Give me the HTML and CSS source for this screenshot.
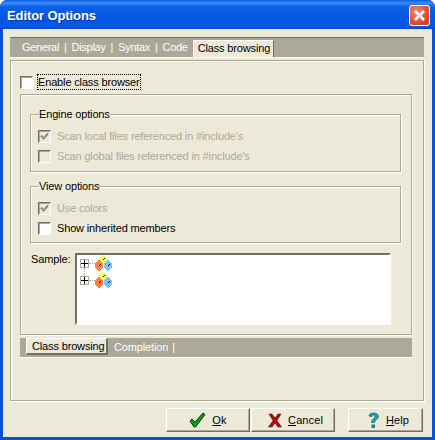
FILE: index.html
```html
<!DOCTYPE html>
<html lang="en">
<head>
    <meta charset="UTF-8">
    <title>Editor Options</title>
    <link rel="stylesheet" href="styles.css">
</head>
<body>
    <div class="window">
        <header class="titlebar">
            <span class="title">Editor Options</span>
            <span class="close">
                <svg width="13" height="13" viewBox="0 0 13 13"><path d="M2 2l9 9M11 2l-9 9" stroke="#fff" stroke-width="2.6" fill="none"/></svg>
            </span>
        </header>
        <div class="client">
            <div class="tabbar top-tabs">
                <span class="tab-link">General</span><span class="sep">|</span>
                <span class="tab-link">Display</span><span class="sep">|</span>
                <span class="tab-link">Syntax</span><span class="sep">|</span>
                <span class="tab-link">Code</span>
                <span class="tab active-top">Class browsing</span>
            </div>
            <div class="page etched">
                <div class="check-row main-check">
                    <span class="cb"></span>
                    <span class="focus">Enable class browser</span>
                </div>
                <div class="panel etched">
                    <fieldset class="group engine etched">
                        <legend>Engine options</legend>
                        <div class="check-row off">
                            <span class="cb dis"><svg width="9" height="9" viewBox="0 0 9 9"><path d="M1 3.500l2.500 3L8 1.500" stroke="#8f8d80" stroke-width="2" fill="none"/></svg></span>
                            <span>Scan local files referenced in #include's</span>
                        </div>
                        <div class="check-row off">
                            <span class="cb dis"></span>
                            <span>Scan global files referenced in #include's</span>
                        </div>
                    </fieldset>
                    <fieldset class="group view etched">
                        <legend>View options</legend>
                        <div class="check-row off">
                            <span class="cb dis"><svg width="9" height="9" viewBox="0 0 9 9"><path d="M1 3.500l2.500 3L8 1.500" stroke="#8f8d80" stroke-width="2" fill="none"/></svg></span>
                            <span>Use colors</span>
                        </div>
                        <div class="check-row">
                            <span class="cb"></span>
                            <span>Show inherited members</span>
                        </div>
                    </fieldset>
                    <div class="sample">
                        <label class="sample-label">Sample:</label>
                        <div class="tree">
                            <div class="node">
                                <span class="expander link-down"><svg width="7" height="7" viewBox="0 0 7 7"><path d="M0 3h7v1H0zM3 0h1v7H3z"/></svg></span>
                                <span class="dots"></span>
                                <svg class="gems" width="17" height="17" viewBox="0 0 17 17" shape-rendering="crispEdges">
                                    <path transform="translate(4 0)" fill="#ffff66" d="M3 0h2v1h1v1h1v1h1v5H7v1H6v1H5v1H3v-1H2V9H1V8H0V3h1V2h1V1h1z"/>
                                    <path transform="translate(0 5)" fill="#ff8040" d="M3 0h2v1h1v1h1v1h1v5H7v1H6v1H5v1H3v-1H2V9H1V8H0V3h1V2h1V1h1z"/>
                                    <path transform="translate(9 5)" fill="#80c0ff" d="M3 0h2v1h1v1h1v1h1v5H7v1H6v1H5v1H3v-1H2V9H1V8H0V3h1V2h1V1h1z"/>
                                    <path fill="#000" d="M9 3h1v1H9zM8 4h1v1H8zM5 9h1v1H5zM4 10h1v1H4zM14 9h1v1h-1zM13 10h1v1h-1z"/>
                                </svg>
                            </div>
                            <div class="node">
                                <span class="expander"><svg width="7" height="7" viewBox="0 0 7 7"><path d="M0 3h7v1H0zM3 0h1v7H3z"/></svg></span>
                                <span class="dots"></span>
                                <svg class="gems" width="17" height="17" viewBox="0 0 17 17" shape-rendering="crispEdges">
                                    <path transform="translate(4 0)" fill="#ffff66" d="M3 0h2v1h1v1h1v1h1v5H7v1H6v1H5v1H3v-1H2V9H1V8H0V3h1V2h1V1h1z"/>
                                    <path transform="translate(0 5)" fill="#ff8040" d="M3 0h2v1h1v1h1v1h1v5H7v1H6v1H5v1H3v-1H2V9H1V8H0V3h1V2h1V1h1z"/>
                                    <path transform="translate(9 5)" fill="#80c0ff" d="M3 0h2v1h1v1h1v1h1v5H7v1H6v1H5v1H3v-1H2V9H1V8H0V3h1V2h1V1h1z"/>
                                    <path fill="#000" d="M9 3h1v1H9zM8 4h1v1H8zM5 9h1v1H5zM4 10h1v1H4zM14 9h1v1h-1zM13 10h1v1h-1z"/>
                                </svg>
                            </div>
                        </div>
                    </div>
                </div>
                <div class="tabbar sub-tabs">
                    <span class="tab active-sub">Class browsing</span>
                    <span class="tab-link">Completion</span><span class="sep">|</span>
                </div>
            </div>
            <footer class="buttons">
                <button class="btn btn-ok">
                    <svg width="17" height="16" viewBox="0 0 17 16"><path d="M1 9l2-2 3 3 8-9 2 1.500L6.500 15H5z" fill="#0f9a1c" stroke="#07420f" stroke-width="1"/></svg>
                    <span><u>O</u>k</span>
                </button>
                <button class="btn btn-cancel">
                    <svg width="14" height="15" viewBox="0 0 14 15"><path d="M1 1h3l3 4 3-4h3L9 7.500l4.500 6.500h-3.500L7 10l-3 4H.5L5 7.500z" fill="#a80e0e" stroke="#6e0a0a" stroke-width=".6"/></svg>
                    <span><u>C</u>ancel</span>
                </button>
                <button class="btn btn-help">
                    <svg width="13" height="17" viewBox="0 0 13 17"><path d="M2 4c0-4 9-4 9.500 0 .3 3-4 4-4 6.500H4.500C4.500 7.500 8 6 8 4 8 2.500 5.500 2.500 5 4.500z" fill="#1ba6bb" stroke="#0c5e6e" stroke-width=".7"/><rect x="4.500" y="12.500" width="3.500" height="3.500" fill="#0d7f92"/></svg>
                    <span><u>H</u>elp</span>
                </button>
            </footer>
        </div>
    </div>
</body>
</html>
```

FILE: styles.css
```css
html, body {
    margin: 0;
    padding: 0;
    background: #fff;
}

body {
    width: 435px;
    height: 440px;
    overflow: hidden;
    font-family: "Liberation Sans", Arial, sans-serif;
    font-size: 11px;
    letter-spacing: -0.15px;
    color: #000;
}

.window {
    height: 440px;
    display: flex;
    flex-direction: column;
    background: #0a50dc;
    border-radius: 7px 7px 0 0;
    overflow: hidden;
}

.titlebar {
    height: 29px;
    flex: none;
    display: flex;
    align-items: center;
    justify-content: space-between;
    padding: 2px 5px 0 7px;
    box-sizing: border-box;
    background: linear-gradient(#0a5be0 0, #3b8cf5 3px, #0c5fe6 7px, #0555e4 20px, #0a58e8 27px, #0040c0 29px);
}

.title {
    color: #fff;
    font-size: 13px;
    font-weight: 700;
    letter-spacing: -0.1px;
    text-shadow: 1px 1px 0 #0a3aa0;
}

.close {
    width: 19px;
    height: 19px;
    display: flex;
    align-items: center;
    justify-content: center;
    border: 1px solid #fff;
    border-radius: 3px;
    background: radial-gradient(circle at 35% 30%, #ee8a6a, #d6492a 70%, #c0391c);
}

.client {
    flex: 1;
    margin: 0 3px 3px 3px;
    padding: 8px 8px 0 7px;
    background: #ece9d8;
    box-sizing: border-box;
}

.etched {
    border: 1px solid #aca899;
    box-shadow: 1px 1px 0 #fff, inset 1px 1px 0 #fff;
}

/* tab bars */
.tabbar {
    display: flex;
    align-items: flex-start;
    background: #aca899;
    color: #fff;
    box-sizing: border-box;
}

.top-tabs {
    height: 21px;
    border-top: 1px solid #716f64;
    border-bottom: 1px solid #fff;
    padding-left: 12px;
    letter-spacing: -0.3px;
}

.sub-tabs {
    height: 20px;
    margin-top: 3px;
    border-bottom: 1px solid #fff;
    padding-left: 6px;
}

.tab-link {
    line-height: 18px;
}

.sep {
    line-height: 18px;
    margin: 0 5px;
}

.sub-tabs .sep {
    margin-left: 4px;
}

.tab {
    color: #000;
    background: #ece9d8;
    box-sizing: border-box;
    border-top: 1px solid #fff;
    border-left: 1px solid #fff;
    border-right: 2px solid #716f64;
    letter-spacing: -0.15px;
    white-space: nowrap;
}

.active-top {
    width: 81px;
    height: 17px;
    margin-top: 2px;
    margin-left: 5px;
    padding-left: 4px;
    line-height: 15px;
    border-right-width: 1px;
}

.active-sub {
    width: 82px;
    height: 17px;
    margin-right: 6px;
    padding-left: 5px;
    line-height: 15px;
    border-bottom: 2px solid #716f64;
}

/* pages */
.page {
    height: 341px;
    margin-top: 2px;
    padding: 13px 11px 0 9px;
    box-sizing: border-box;
}

.check-row {
    height: 16px;
    display: flex;
    align-items: center;
    gap: 6px;
}

.main-check {
    gap: 4px;
}

.focus {
    outline: 1px dotted #000;
    padding: 1px 0;
    margin-left: 1px;
}

.cb {
    width: 13px;
    height: 13px;
    flex: none;
    display: flex;
    align-items: center;
    justify-content: center;
    box-sizing: border-box;
    background: #fff;
    border: 1px solid;
    border-color: #716f64 #fff #fff #716f64;
    box-shadow: inset 1px 1px 0 #aca899;
}

.cb.dis {
    background: #ece9d8;
}

.off {
    color: #aca899;
}

.panel {
    height: 241px;
    margin-top: 4px;
    padding: 14px 10px 0 9px;
    box-sizing: border-box;
}

.group {
    margin: 0;
    padding: 6px 0 0 7px;
    min-width: 0;
    box-sizing: border-box;
}

.group legend {
    padding: 0;
    margin-left: 1px;
    line-height: 11px;
}

.engine {
    height: 63px;
    margin-bottom: 9px;
}

.view {
    height: 62px;
}

.group .check-row {
    height: 20px;
}

/* sample tree */
.sample {
    display: flex;
    margin-top: 10px;
}

.sample-label {
    width: 45px;
    padding-left: 1px;
    box-sizing: border-box;
    line-height: 13px;
}

.tree {
    width: 316px;
    height: 72px;
    box-sizing: border-box;
    padding: 0 0 0 3px;
    background: #fff;
    border: 2px solid;
    border-color: #716f64 #fff #fff #716f64;
}

.node {
    height: 17px;
    display: flex;
    align-items: center;
}

.expander {
    position: relative;
    width: 9px;
    height: 9px;
    flex: none;
    display: flex;
    align-items: center;
    justify-content: center;
    box-sizing: border-box;
    border: 1px solid #aca899;
    background: #fff;
}

.link-down::after {
    content: "";
    position: absolute;
    left: 3px;
    top: 8px;
    height: 8px;
    border-left: 1px dotted #aca899;
}

.dots {
    width: 6px;
    border-top: 1px dotted #aca899;
}

.gems {
    flex: none;
}

/* bottom buttons */
.buttons {
    display: flex;
    justify-content: flex-end;
    margin-top: 7px;
    padding-right: 1px;
}

.btn {
    height: 24px;
    display: flex;
    align-items: center;
    justify-content: center;
    gap: 6px;
    padding: 0;
    box-sizing: border-box;
    font: inherit;
    letter-spacing: 0.1px;
    color: #000;
    background: #ece9d8;
    border: 1px solid;
    border-color: #fff #716f64 #716f64 #fff;
    box-shadow: inset -1px -1px 0 #aca899;
}

.btn-ok {
    width: 84px;
}

.btn-cancel {
    width: 84px;
    margin-left: 1px;
    padding-left: 5px;
}

.btn-help {
    width: 75px;
    margin-left: 13px;
    padding-left: 5px;
}
```
